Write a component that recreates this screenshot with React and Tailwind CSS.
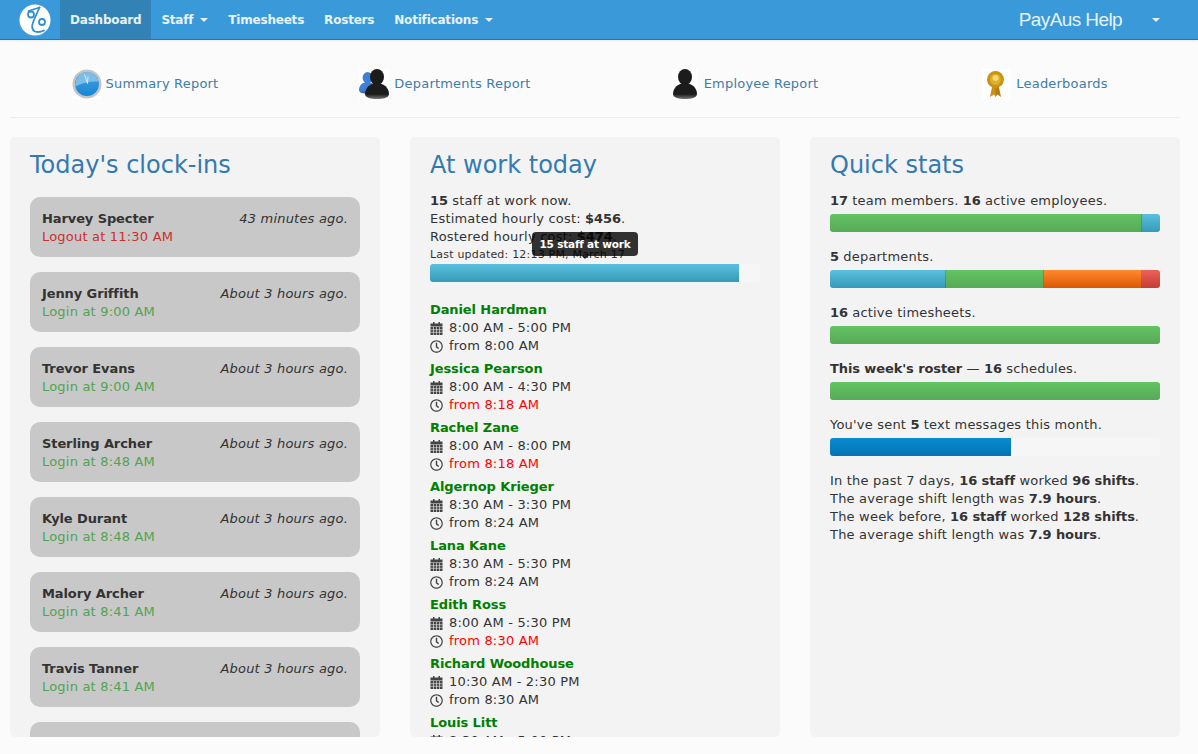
import { FaRegClock } from 'react-icons/fa';

const clockIns = [
  { name: 'Harvey Specter', when: '43 minutes ago.', status: 'Logout at 11:30 AM', out: true },
  { name: 'Jenny Griffith', when: 'About 3 hours ago.', status: 'Login at 9:00 AM' },
  { name: 'Trevor Evans', when: 'About 3 hours ago.', status: 'Login at 9:00 AM' },
  { name: 'Sterling Archer', when: 'About 3 hours ago.', status: 'Login at 8:48 AM' },
  { name: 'Kyle Durant', when: 'About 3 hours ago.', status: 'Login at 8:48 AM' },
  { name: 'Malory Archer', when: 'About 3 hours ago.', status: 'Login at 8:41 AM' },
  { name: 'Travis Tanner', when: 'About 3 hours ago.', status: 'Login at 8:41 AM' },
  { name: '', when: '', status: '' },
];

const atWork = [
  { name: 'Daniel Hardman', shift: '8:00 AM - 5:00 PM', from: 'from 8:00 AM' },
  { name: 'Jessica Pearson', shift: '8:00 AM - 4:30 PM', from: 'from 8:18 AM', late: true },
  { name: 'Rachel Zane', shift: '8:00 AM - 8:00 PM', from: 'from 8:18 AM', late: true },
  { name: 'Algernop Krieger', shift: '8:30 AM - 3:30 PM', from: 'from 8:24 AM' },
  { name: 'Lana Kane', shift: '8:30 AM - 5:30 PM', from: 'from 8:24 AM' },
  { name: 'Edith Ross', shift: '8:00 AM - 5:30 PM', from: 'from 8:30 AM', late: true },
  { name: 'Richard Woodhouse', shift: '10:30 AM - 2:30 PM', from: 'from 8:30 AM' },
  { name: 'Louis Litt', shift: '8:30 AM - 5:00 PM', from: 'from 8:30 AM' },
];

const info = 'bg-linear-to-b from-[#5bc0de] to-[#339bb9]';
const success = 'bg-linear-to-b from-[#62c462] to-[#57a957]';
const warning = 'bg-linear-to-b from-[#ff8a2c] to-[#dd5600]';
const danger = 'bg-linear-to-b from-[#ee5f5b] to-[#c43c35]';
const primary = 'bg-linear-to-b from-[#0a8bd0] to-[#0473b5]';

function Caret({ className = '' }) {
  return <span className={`inline-block h-0 w-0 border-x-[4px] border-t-[4px] border-x-transparent border-t-[#e4f0f8] ${className}`} />;
}

function NavItem({ label, caret, active }) {
  return (
    <a className={`flex h-[39px] items-center px-[10px] text-[12px] font-bold tracking-[-0.2px] text-[#e8f2f9] ${active ? 'bg-[#3282b5]' : ''}`}>
      {label}
      {caret && <Caret className="ml-[7px]" />}
    </a>
  );
}

function Logo() {
  return (
    <svg width="32" height="32" viewBox="0 0 32 32" className="ml-[19px]">
      <circle cx="16" cy="16" r="15.5" fill="#fff" />
      <g fill="none" stroke="#2f90d4" strokeWidth="1.8" strokeLinecap="round" strokeLinejoin="round">
        <circle cx="12" cy="10.5" r="3" />
        <circle cx="23" cy="18" r="3" />
        <path d="M20.5 3.5 L14.5 17 C12.5 22 12.5 26 16 27.5 C19 28.5 22 28 25 26.5" />
        <path d="M20.5 3.5 L9.5 7" />
      </g>
    </svg>
  );
}

function ClockIcon() {
  return (
    <svg width="30" height="30" viewBox="0 0 30 30" className="bg-white">
      <defs>
        <linearGradient id="clockFace" x1="0" y1="0" x2="0" y2="1">
          <stop offset="0" stopColor="#4f9fd8" />
          <stop offset="1" stopColor="#1587d8" />
        </linearGradient>
      </defs>
      <circle cx="15" cy="15" r="14.5" fill="#c4c4c4" />
      <circle cx="15" cy="15" r="12" fill="url(#clockFace)" />
      <path d="M3.2 17.5 C9 14 20 12 26.6 12.5 C25 6.5 20 3 15 3 C8 3 3 9 3.2 17.5 Z" fill="#7cbce8" />
      <path d="M12.5 5.5 L15.5 14.5 L16 7.5" fill="none" stroke="#eef7fc" strokeWidth="0.8" />
    </svg>
  );
}

function Person({ x = 0, y = 0, s = 1, head, body, id }) {
  return (
    <g transform={`translate(${x} ${y}) scale(${s})`}>
      <defs>
        <linearGradient id={id} x1="0" y1="0" x2="0" y2="1">
          <stop offset="0" stopColor={head} />
          <stop offset="0.7" stopColor={head} />
          <stop offset="1" stopColor={body} />
        </linearGradient>
      </defs>
      <path d="M12 14 C5 14 0 19 0 25 C0 29 6 30 12 30 C18 30 24 29 24 25 C24 19 19 14 12 14 Z" fill={`url(#${id})`} />
      <ellipse cx="12" cy="8" rx="7" ry="8" fill={head} />
    </g>
  );
}

function TeamIcon() {
  return (
    <svg width="30" height="30" viewBox="0 0 30 30" className="bg-white">
      <Person id="teamBack" x={0} y={3} s={0.72} head="#3f7fd6" body="#2a5fb0" />
      <Person id="teamFront" x={6} y={0} s={1} head="#1c1c1c" body="#777" />
    </svg>
  );
}

function UserIcon() {
  return (
    <svg width="26" height="30" viewBox="0 0 26 30" className="bg-white">
      <Person id="userSolo" x={1} y={0} s={1} head="#1c1c1c" body="#777" />
    </svg>
  );
}

function MedalIcon() {
  return (
    <svg width="29" height="30" viewBox="0 0 29 30" className="bg-white">
      <path d="M10.5 16 L8 28 L12 25.5 L14 28 L14 16 Z" fill="#c98f16" />
      <path d="M16.5 16 L19 28 L15.5 25.5 L13.5 28 L13.5 16 Z" fill="#b57e10" />
      <circle cx="13.5" cy="10.5" r="8.5" fill="#c9940f" />
      <circle cx="13.5" cy="10.5" r="5.5" fill="#dcae2e" />
      <circle cx="13.5" cy="9" r="3" fill="#f3d873" />
    </svg>
  );
}

function CalendarIcon() {
  return (
    <svg width="13" height="13" viewBox="0 0 13 13" className="shrink-0">
      <rect x="0.5" y="1.5" width="12" height="3" fill="#444" />
      <rect x="3" y="0" width="1.5" height="2.5" fill="#444" />
      <rect x="8.5" y="0" width="1.5" height="2.5" fill="#444" />
      <rect x="0.5" y="5" width="12" height="8" fill="#444" />
      <path d="M3.5 5v8M6.5 5v8M9.5 5v8M0.5 7.7h12M0.5 10.3h12" stroke="#f3f3f3" strokeWidth="0.6" />
    </svg>
  );
}

function Report({ icon, label, gap }) {
  return (
    <a className={`flex items-center justify-center text-[13px] tracking-[0.2px] text-[#3f7ca6] ${gap}`}>
      {icon}
      {label}
    </a>
  );
}

function Panel({ title, titleClass = '', children }) {
  return (
    <section className="h-[600px] overflow-hidden rounded-[5px] bg-[#f3f3f3] px-[20px]">
      <h2 className={`mt-[13px] mb-[12px] h-[30px] text-[24px] leading-[30px] font-normal tracking-normal text-[#337ab0] ${titleClass}`}>{title}</h2>
      {children}
    </section>
  );
}

function Bar({ children, className = '' }) {
  return <div className={`flex h-[18px] overflow-hidden rounded-[3px] bg-[#f6f6f6] ${className}`}>{children}</div>;
}

function Segment({ width, tone }) {
  return <div className={`h-full border-r border-black/15 last:border-r-0 ${tone}`} style={{ width: `${width}%` }} />;
}

function Stat({ children, bar }) {
  return (
    <div className="mb-[16px]">
      <p className="mb-[4px]">{children}</p>
      {bar}
    </div>
  );
}

function B({ children }) {
  return <b className="font-bold tracking-[-0.1px]">{children}</b>;
}

export default function App() {
  return (
    <div className="h-screen overflow-hidden bg-[#fbfbfb] font-['DejaVu_Sans','Liberation_Sans',sans-serif] text-[13px] leading-[18px] tracking-[0.2px] text-[#333]">
      {/* Navbar */}
      <header className="flex h-[40px] items-start justify-between border-b border-[#2a76a8] bg-[#3a9ad9] shadow-[0_1px_2px_rgba(0,0,0,0.08)]">
        <nav className="flex items-center">
          <div className="flex h-[39px] w-[60px] items-center">
            <Logo />
          </div>
          <NavItem label="Dashboard" active />
          <NavItem label="Staff" caret />
          <NavItem label="Timesheets" />
          <NavItem label="Rosters" />
          <NavItem label="Notifications" caret />
        </nav>
        <a className="flex h-[39px] items-center pr-[38px] font-['Liberation_Sans',sans-serif] text-[19px] tracking-[-0.6px] text-[#e8f2f9]">
          PayAus Help
          <Caret className="ml-[30px]" />
        </a>
      </header>

      {/* Report links */}
      <div className="ml-[10px] grid h-[78px] w-[1170px] grid-cols-4 gap-[30px] border-b border-[#ececec] pt-[10px]">
        <Report icon={<ClockIcon />} label="Summary Report" gap="gap-[4px]" />
        <Report icon={<TeamIcon />} label="Departments Report" gap="gap-[5px]" />
        <Report icon={<UserIcon />} label="Employee Report" gap="gap-[6px]" />
        <Report icon={<MedalIcon />} label="Leaderboards" gap="gap-[5px]" />
      </div>

      <main className="ml-[10px] mt-[19px] grid w-[1170px] grid-cols-3 gap-[30px]">
        {/* Clock-ins */}
        <Panel title="Today's clock-ins">
          <div className="mt-[17px] flex flex-col gap-[15px]">
            {clockIns.map((c, i) => (
              <div key={i} className="h-[60px] shrink-0 rounded-[10px] bg-[#c8c8c8] px-[12px] pt-[13px]">
                <div className="flex justify-between">
                  <strong className="font-bold tracking-[-0.1px]">{c.name}</strong>
                  <em className="italic">{c.when}</em>
                </div>
                <div className={c.out ? 'text-[#c9302c]' : 'text-[#51a351]'}>{c.status}</div>
              </div>
            ))}
          </div>
        </Panel>

        {/* At work */}
        <Panel title="At work today" titleClass="tracking-[-0.6px]">
          <p><B>15</B> staff at work now.</p>
          <p>Estimated hourly cost: <B>$456</B>.</p>
          <p>Rostered hourly cost: <B>$474</B>.</p>
          <div className="relative">
            <p className="text-[11px] tracking-[0.2px]">Last updated: 12:13 PM, March 17</p>
            <div className="absolute left-[102px] top-[-14px] z-10 h-[24px] w-[106px] rounded-[4px] bg-black/80 text-center text-[10.5px] leading-[24px] font-bold tracking-[-0.2px] text-white">
              15 staff at work
              <span className="absolute left-1/2 top-full -ml-[3px] h-0 w-0 border-x-[3px] border-t-[3px] border-x-transparent border-t-black/80" />
            </div>
          </div>
          <Bar className="mb-[19px]">
            <Segment width={93.75} tone={info} />
          </Bar>
          {atWork.map(p => (
            <div key={p.name} className="mb-[5px]">
              <div className="font-bold tracking-[-0.1px] text-[#008000]">{p.name}</div>
              <div className="flex items-center gap-[6px]">
                <CalendarIcon />
                {p.shift}
              </div>
              <div className="flex items-center gap-[6px]">
                <FaRegClock className="h-[13px] w-[13px] text-[#444]" />
                <span className={p.late ? 'text-[#ff0000]' : ''}>{p.from}</span>
              </div>
            </div>
          ))}
        </Panel>

        {/* Quick stats */}
        <Panel title="Quick stats" titleClass="tracking-[-0.6px]">
          <Stat bar={<Bar><Segment width={94.5} tone={success} /><Segment width={5.5} tone={info} /></Bar>}>
            <B>17</B> team members. <B>16</B> active employees.
          </Stat>
          <Stat bar={<Bar><Segment width={35.3} tone={info} /><Segment width={29.4} tone={success} /><Segment width={29.7} tone={warning} /><Segment width={5.6} tone={danger} /></Bar>}>
            <B>5</B> departments.
          </Stat>
          <Stat bar={<Bar><Segment width={100} tone={success} /></Bar>}>
            <B>16</B> active timesheets.
          </Stat>
          <Stat bar={<Bar><Segment width={100} tone={success} /></Bar>}>
            <B>This week's roster</B> — <B>16</B> schedules.
          </Stat>
          <Stat bar={<Bar><Segment width={54.8} tone={primary} /></Bar>}>
            You've sent <B>5</B> text messages this month.
          </Stat>
          <p>In the past 7 days, <B>16 staff</B> worked <B>96 shifts</B>.</p>
          <p>The average shift length was <B>7.9 hours</B>.</p>
          <p>The week before, <B>16 staff</B> worked <B>128 shifts</B>.</p>
          <p>The average shift length was <B>7.9 hours</B>.</p>
        </Panel>
      </main>
    </div>
  );
}
